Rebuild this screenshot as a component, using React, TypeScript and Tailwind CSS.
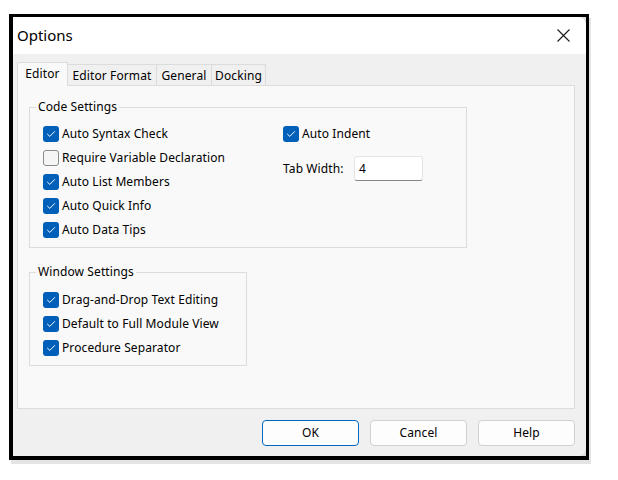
import type { ReactNode } from 'react'

const Check = ({ checked }: { checked: boolean }) =>
	checked ? (
		<span className="flex h-[16px] w-[16px] shrink-0 items-center justify-center rounded-[3px] bg-[#005fb8]">
			<svg width="10" height="8" viewBox="0 0 10 8" fill="none">
				<path d="M1.5 4.2 L3.8 6.4 L8.6 1.6" stroke="white" strokeWidth="1" strokeLinecap="round" strokeLinejoin="round" />
			</svg>
		</span>
	) : (
		<span className="h-[16px] w-[16px] shrink-0 rounded-[3px] border border-[#8b8b8b] bg-[#f5f5f5]" />
	)

const Option = ({ label, checked = true }: { label: string; checked?: boolean }) => (
	<label className="flex h-[24px] items-center gap-[3px] whitespace-nowrap">
		<Check checked={checked} />
		<span>{label}</span>
	</label>
)

const Group = ({ title, className, children }: { title: string; className: string; children: ReactNode }) => (
	<div className={`relative border border-[#dcdcdc] ${className}`}>
		<span className="absolute -top-[9px] left-[6px] bg-[#f9f9f9] px-[2px] leading-[16px]">{title}</span>
		{children}
	</div>
)

const Button = ({ label, primary = false }: { label: string; primary?: boolean }) => (
	<button
		className={`h-[26px] w-[97px] rounded-[4px] border bg-[#fdfdfd] ${
			primary ? 'border-[#0067c0]' : 'border-[#d0d0d0]'
		}`}
	>
		{label}
	</button>
)

export default function App() {
	return (
		<div className="h-[480px] w-[618px] bg-white pl-[9px] pt-[14px] font-['Noto_Sans',sans-serif] text-[12px] tracking-[0.1px] text-black">
			<div className="h-[446px] w-[580px] border-b-4 border-l-4 border-r-[3px] border-t-[3px] border-black bg-[#dedede] shadow-[2px_4px_0_0_#e4e4e4]">
				<div className="flex h-full flex-col overflow-hidden rounded-r-[8px] bg-[#f0f0f0]">
					{/* Title bar */}
					<div className="flex h-[37px] items-center justify-between bg-white pl-[4px] pr-[16px]">
						<span className="text-[15px] tracking-normal">Options</span>
						<svg width="13" height="13" viewBox="0 0 13 13">
							<path d="M0.5 0.5 L12.5 12.5 M12.5 0.5 L0.5 12.5" stroke="#1a1a1a" strokeWidth="1.1" />
						</svg>
					</div>

					<div className="flex flex-1 flex-col pb-[10px] pl-[4px] pr-[11px] pt-[8px]">
						{/* Tabs */}
						<div className="flex h-[23px] items-end">
							<div className="relative z-10 -mb-px flex h-[24px] w-[51px] items-start justify-center border-l border-r border-t border-[#dcdcdc] bg-[#f9f9f9] pt-[2px]">
								Editor
							</div>
							<div className="flex h-[21px] w-[89px] items-center justify-center border-r border-t border-[#dcdcdc] pt-[2px]">
								Editor Format
							</div>
							<div className="flex h-[21px] w-[55px] items-center justify-center border-r border-t border-[#dcdcdc] pt-[2px]">
								General
							</div>
							<div className="flex h-[21px] w-[54px] items-center justify-center border-r border-t border-[#dcdcdc] pt-[2px]">
								Docking
							</div>
						</div>

						{/* Tab page */}
						<div className="h-[324px] border border-[#dcdcdc] bg-[#f9f9f9] pl-[11px] pt-[21px]">
							<Group title="Code Settings" className="flex h-[141px] w-[438px] pl-[13px] pt-[14px]">
								<div className="w-[240px]">
									<Option label="Auto Syntax Check" />
									<Option label="Require Variable Declaration" checked={false} />
									<Option label="Auto List Members" />
									<Option label="Auto Quick Info" />
									<Option label="Auto Data Tips" />
								</div>
								<div>
									<Option label="Auto Indent" />
									<div className="mt-[10px] flex h-[25px] items-center">
										<span className="w-[71px]">Tab Width:</span>
										<div className="flex h-[25px] w-[69px] items-center rounded-[3px] border border-[#e5e5e5] border-b-[#868686] bg-white pl-[4px]">
											4
										</div>
									</div>
								</div>
							</Group>

							<Group title="Window Settings" className="mt-[24px] h-[94px] w-[218px] pl-[13px] pt-[15px]">
								<Option label="Drag-and-Drop Text Editing" />
								<Option label="Default to Full Module View" />
								<Option label="Procedure Separator" />
							</Group>
						</div>

						{/* Buttons */}
						<div className="mt-[11px] flex justify-end gap-[11px]">
							<Button label="OK" primary />
							<Button label="Cancel" />
							<Button label="Help" />
						</div>
					</div>
				</div>
			</div>
		</div>
	)
}
